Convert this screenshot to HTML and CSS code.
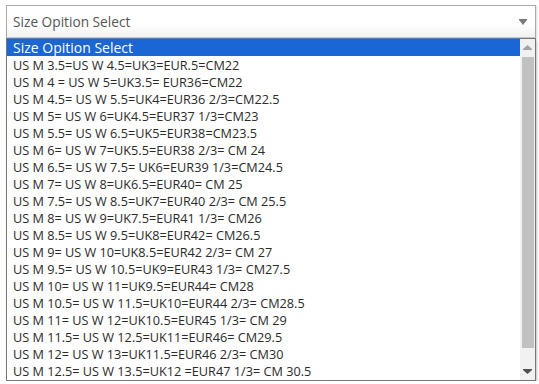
FILE: index.html
```
<!DOCTYPE html>
<html>
<head>
	<title>Size Select</title>
	<link rel="stylesheet" href="styles.css">
</head>
<body>
<div class="picker">
	<div class="select-box">
		<span>Size Opition Select</span>
		<svg class="caret" width="8" height="7" viewBox="0 0 8 7"><polygon points="0,0 8,0 8,1 4,6 0,1" fill="#7a7a7a"/></svg>
	</div>
	<div class="dropdown">
		<ul class="options">
			<li class="selected">Size Opition Select</li>
			<li>US M 3.5=US W 4.5=UK3=EUR.5=CM22</li>
			<li>US M 4 = US W 5=UK3.5= EUR36=CM22</li>
			<li>US M 4.5= US W 5.5=UK4=EUR36 2/3=CM22.5</li>
			<li>US M 5= US W 6=UK4.5=EUR37 1/3=CM23</li>
			<li>US M 5.5= US W 6.5=UK5=EUR38=CM23.5</li>
			<li>US M 6= US W 7=UK5.5=EUR38 2/3= CM 24</li>
			<li>US M 6.5= US W 7.5= UK6=EUR39 1/3=CM24.5</li>
			<li>US M 7= US W 8=UK6.5=EUR40= CM 25</li>
			<li>US M 7.5= US W 8.5=UK7=EUR40 2/3= CM 25.5</li>
			<li>US M 8= US W 9=UK7.5=EUR41 1/3= CM26</li>
			<li>US M 8.5= US W 9.5=UK8=EUR42= CM26.5</li>
			<li>US M 9= US W 10=UK8.5=EUR42 2/3= CM 27</li>
			<li>US M 9.5= US W 10.5=UK9=EUR43 1/3= CM27.5</li>
			<li>US M 10= US W 11=UK9.5=EUR44= CM28</li>
			<li>US M 10.5= US W 11.5=UK10=EUR44 2/3= CM28.5</li>
			<li>US M 11= US W 12=UK10.5=EUR45 1/3= CM 29</li>
			<li>US M 11.5= US W 12.5=UK11=EUR46= CM29.5</li>
			<li>US M 12= US W 13=UK11.5=EUR46 2/3= CM30</li>
			<li>US M 12.5= US W 13.5=UK12 =EUR47 1/3= CM 30.5</li>
		</ul>
		<div class="scrollbar">
			<div class="sb-button">
				<svg width="9" height="5" viewBox="0 0 9 5"><polygon points="4.5,0 9,4 9,5 0,5 0,4" fill="#a3a3a3"/></svg>
			</div>
			<div class="sb-track"><div class="sb-thumb"></div></div>
			<div class="sb-button">
				<svg width="9" height="5" viewBox="0 0 9 5"><polygon points="0,0 9,0 9,1 4.5,5 0,1" fill="#505050"/></svg>
			</div>
		</div>
	</div>
</div>
</body>
</html>
```
FILE: styles.css
```
html{
	background-color: #fff;
}
body{
	margin: 0;
	padding: 5px 0 0 6px;
	font-family: "Open Sans", sans-serif;
	font-size: 12.7px;
}
.picker{
	width: 530px;
}
.select-box{
	height: 33px;
	box-sizing: border-box;
	border: 1px solid #a9a9a9;
	border-bottom-color: #c8c8c8;
	background: linear-gradient(#fff 60%, #f1f1f1);
	box-shadow: 1px 1px 2px rgba(0,0,0,0.15);
	display: flex;
	align-items: center;
	justify-content: space-between;
	padding: 0 8px 0 6px;
	color: #555;
	font-size: 13.7px;
}
.caret{
	margin-top: 1px;
}
.dropdown{
	height: 343px;
	box-sizing: border-box;
	border: 1px solid #767676;
	background-color: #fff;
	box-shadow: 1px 2px 2px rgba(0,0,0,0.25);
	display: flex;
}
.options{
	flex: 1;
	list-style: none;
	margin: 0;
	padding: 0;
	color: #2a2a2a;
	display: flex;
	flex-direction: column;
}
.options li{
	flex: 1 1 0;
	min-height: 0;
	line-height: 16px;
	display: flex;
	align-items: center;
	padding-left: 6px;
	white-space: nowrap;
}
.options .selected{
	background-color: #1a66d2;
	color: #fff;
	font-size: 14px;
}
.scrollbar{
	width: 15px;
	background-color: #f1f1f1;
	display: flex;
	flex-direction: column;
}
.sb-button{
	height: 17px;
	display: flex;
	align-items: center;
	justify-content: center;
}
.sb-track{
	flex: 1;
	padding: 1px 1px 15px 2px;
	display: flex;
}
.sb-thumb{
	flex: 1;
	background-color: #c1c1c1;
}
```
